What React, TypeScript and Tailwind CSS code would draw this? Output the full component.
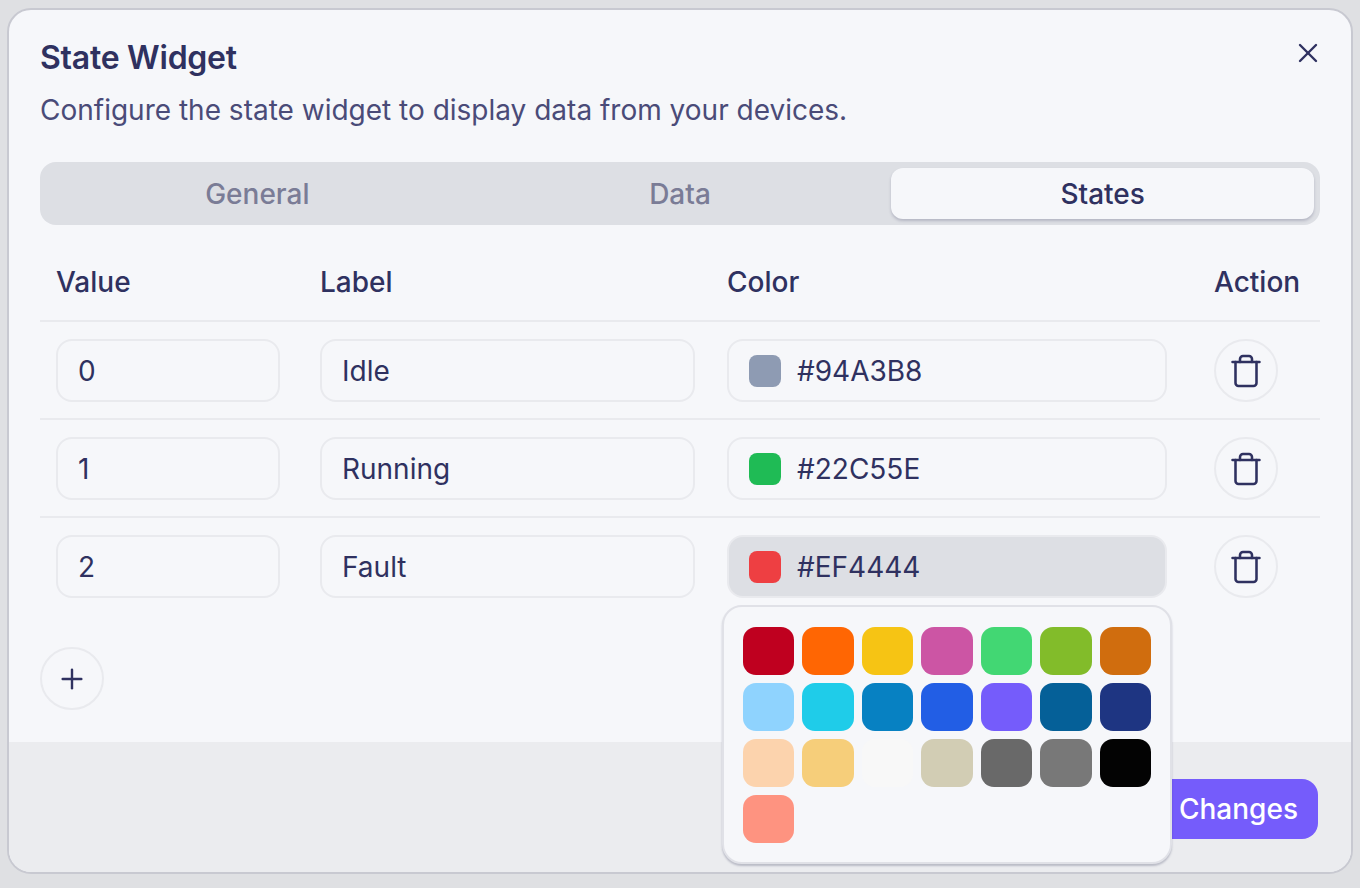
import { Plus, Trash, X } from 'lucide-react'

const rows = [
  { value: '0', label: 'Idle', color: '#94A3B8', swatch: 'bg-[#8e9bb3]' },
  { value: '1', label: 'Running', color: '#22C55E', swatch: 'bg-[#1fbb55]' },
  { value: '2', label: 'Fault', color: '#EF4444', swatch: 'bg-[#ee3f42]' },
]

const palette = [
  'bg-[#bf001f]', 'bg-[#ff6603]', 'bg-[#f6c414]', 'bg-[#cc55a4]', 'bg-[#42d773]', 'bg-[#82bc2a]', 'bg-[#d06d0e]',
  'bg-[#8fd3fe]', 'bg-[#1fcce9]', 'bg-[#0781c2]', 'bg-[#225ee5]', 'bg-[#755cfb]', 'bg-[#056098]', 'bg-[#1e3582]',
  'bg-[#fcd3ad]', 'bg-[#f6ce7a]', 'bg-[#f8f8f8]', 'bg-[#d2cdb4]', 'bg-[#696969]', 'bg-[#787878]', 'bg-[#030303]',
  'bg-[#fe9380]',
]

const tabs = ['General', 'Data', 'States']

export default function App() {
  return (
    <div className="h-[888px] overflow-hidden bg-[#dfe0e3] px-[7px] pt-2 font-['Inter',sans-serif] text-[#2f3160]">
      <div className="relative h-[866px] rounded-[24px] border-2 border-[#c8c9d1] bg-[#f6f7fa]">
        <button className="absolute right-[27px] top-[27px] text-[#2f3160]">
          <X size={32} strokeWidth={1.8} />
        </button>

        <div className="h-[732px] px-[31px] pt-[28px]">
          {/* Header */}
          <h2 className="text-[32px] font-semibold leading-[40px] tracking-[-0.25px]">State Widget</h2>
          <p className="mt-3 text-[28px] leading-[40px] text-[#4a4b78]">
            Configure the state widget to display data from your devices.
          </p>

          {/* Tabs */}
          <div className="mt-8 grid h-[63px] grid-cols-3 rounded-2xl bg-[#dddfe4] p-1.5">
            {tabs.map((t) => (
              <div
                key={t}
                className={`flex items-center justify-center rounded-xl text-[28px] font-medium ${
                  t === 'States' ? 'bg-[#f6f7fa] text-[#2f3160] shadow-[0_2px_3px_rgba(40,42,80,0.22)]' : 'text-[#7a7c96]'
                }`}
              >
                {t}
              </div>
            ))}
          </div>

          {/* Table */}
          <div className="grid h-[97px] grid-cols-[264px_407px_487px_1fr] items-center border-b-2 border-[#e9eaee] pl-4 pt-[18px] text-[28px] font-medium">
            <div>Value</div>
            <div>Label</div>
            <div>Color</div>
            <div>Action</div>
          </div>

          {rows.map((r, i) => (
            <div
              key={r.value}
              className={`grid h-[98px] grid-cols-[264px_407px_487px_1fr] items-start border-b-2 pl-4 pt-[17px] text-[28px] ${
                i < 2 ? 'border-[#e9eaee]' : 'border-transparent'
              }`}
            >
              <div className="flex h-[63px] w-56 items-center rounded-2xl border-2 border-[#e9eaee] pl-5">{r.value}</div>
              <div className="flex h-[63px] w-[375px] items-center rounded-2xl border-2 border-[#e9eaee] pl-5">{r.label}</div>
              <div className="relative">
                <div
                  className={`flex h-[63px] w-[440px] items-center gap-4 rounded-2xl border-2 border-[#e9eaee] pl-5 ${
                    i === 2 ? 'bg-[#dddfe4]' : ''
                  }`}
                >
                  <span className={`h-8 w-8 rounded-lg ${r.swatch}`} />
                  {r.color}
                </div>
                {i === 2 && (
                  <div className="absolute left-[-5px] top-[70px] z-10 h-[259px] w-[450px] rounded-[20px] border-2 border-[#e0e1e7] bg-[#f6f7fa] px-[19px] pt-5 shadow-[0_2px_2px_rgba(40,42,80,0.25)]">
                    <div className="grid grid-cols-7 gap-2">
                      {palette.map((c, j) => (
                        <div key={j} className={`h-12 rounded-[13px] ${c}`} />
                      ))}
                    </div>
                  </div>
                )}
              </div>
              <button className="flex h-[63px] w-16 items-center justify-center rounded-full border-2 border-[#e9eaee]">
                <Trash size={36} strokeWidth={1.7} />
              </button>
            </div>
          ))}

          <button className="mt-[31px] flex h-[63px] w-16 items-center justify-center rounded-full border-2 border-[#e9eaee]">
            <Plus size={32} strokeWidth={1.8} />
          </button>
        </div>

        {/* Footer */}
        <div className="flex h-[130px] items-start justify-end rounded-b-[22px] bg-[#ebecef] pr-[33px] pt-[37px]">
          <button className="h-[60px] rounded-2xl bg-[#755cfb] px-5 text-[28px] font-medium text-white">
            Save Changes
          </button>
        </div>
      </div>
    </div>
  )
}
